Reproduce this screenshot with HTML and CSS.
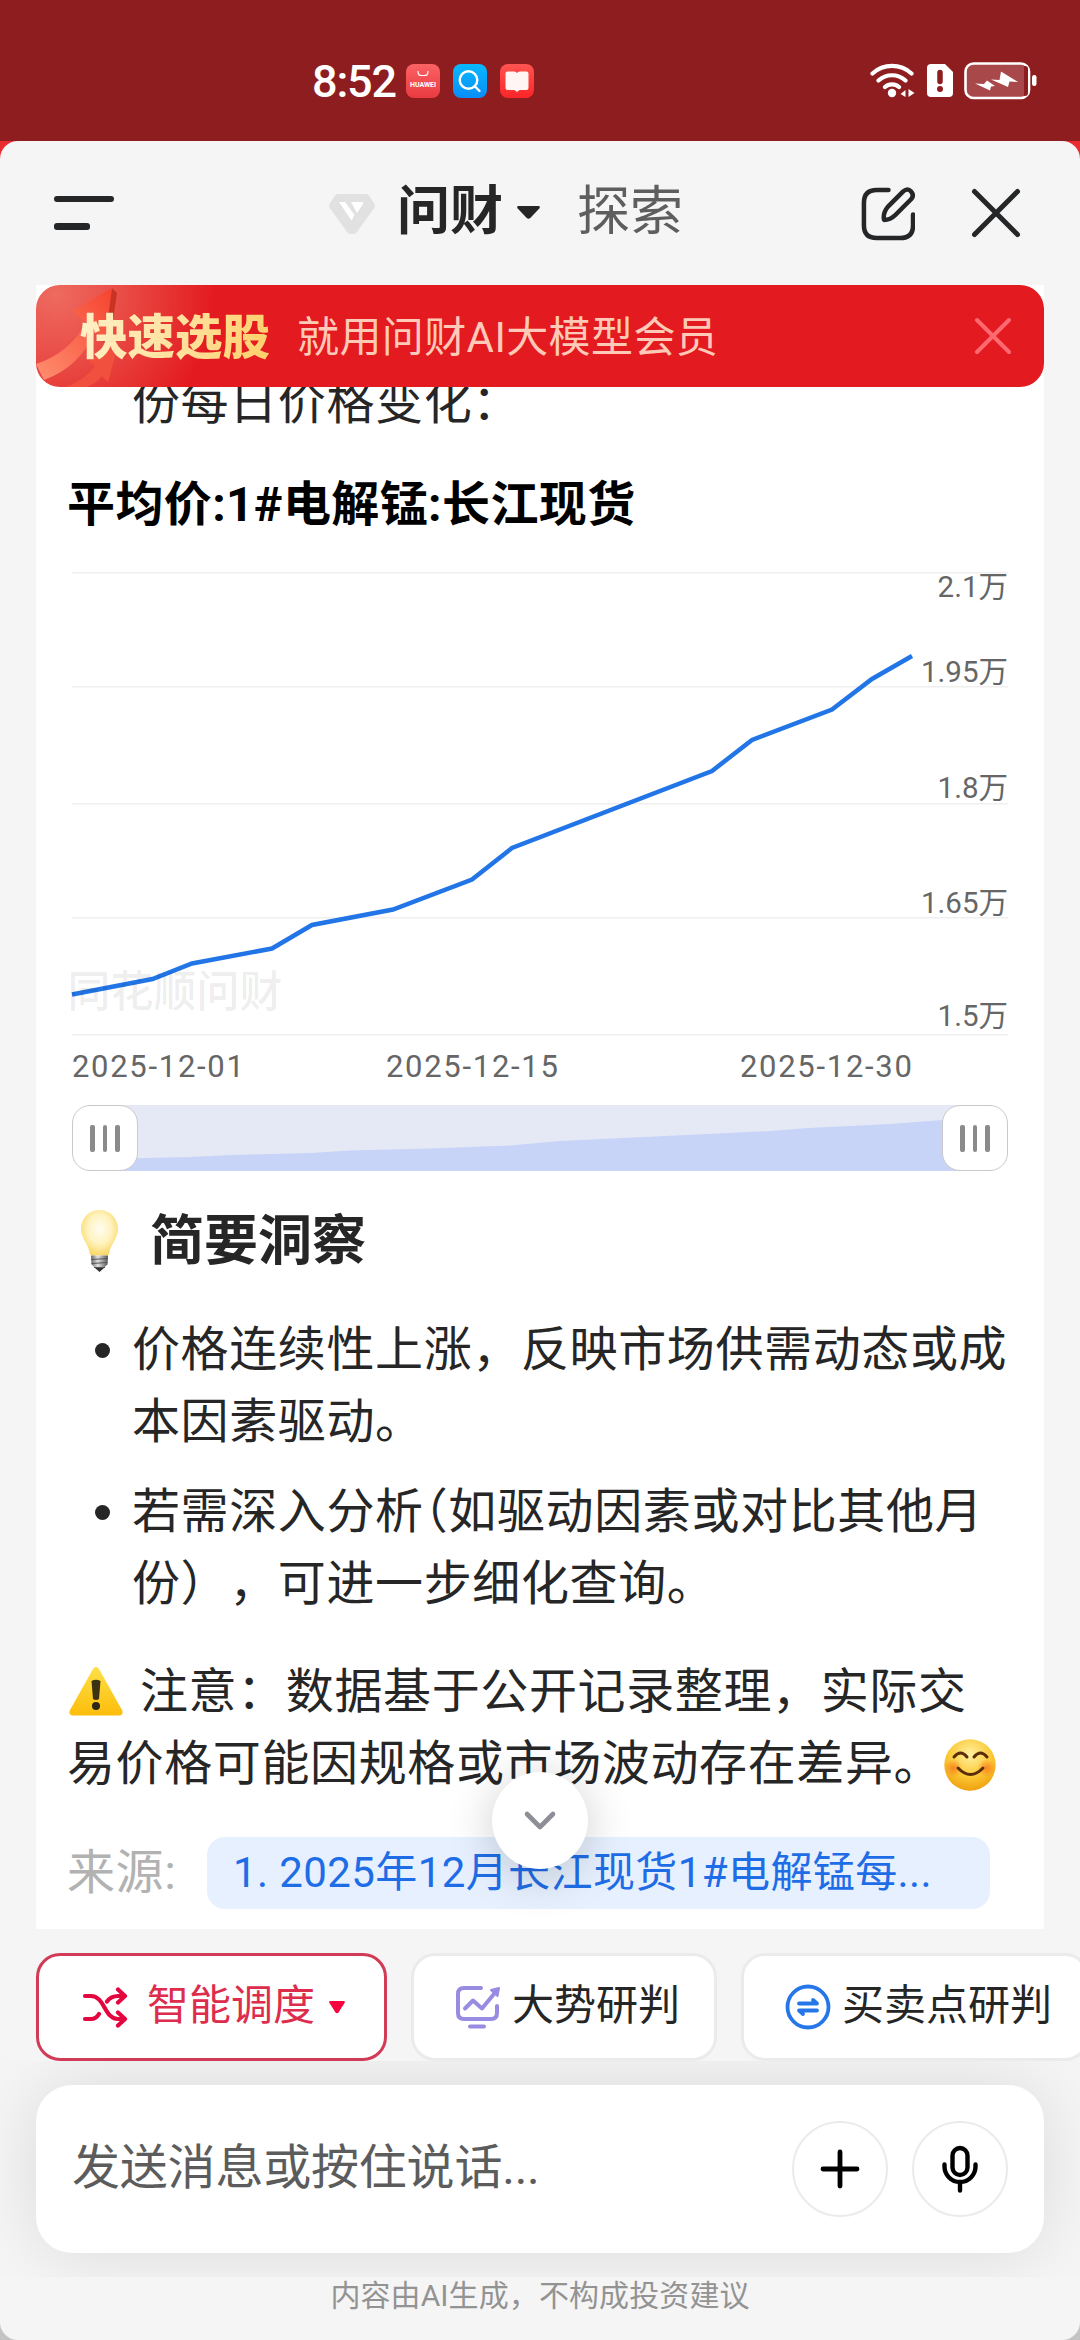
FILE: index.html
```html
<!DOCTYPE html>
<html lang="zh-CN">
<head>
<meta charset="utf-8">
<title>问财</title>
<link rel="stylesheet" href="styles.css">
</head>
<body>
<div class="status">
  <div class="status-left">
    <span class="time">8:52</span>
    <span class="app app-huawei">
      <svg width="34" height="34" viewBox="0 0 34 34"><path d="M12 7c0 5 2 4.500 5 4.500s5 .5 5-4.500" fill="none" stroke="#fff" stroke-width="1.200"/><text class="brand" x="17" y="22.500" text-anchor="middle" textLength="26">HUAWEI</text></svg>
    </span>
    <span class="app app-search">
      <svg width="34" height="34" viewBox="0 0 34 34" fill="none" stroke="#fff" stroke-width="2.400" stroke-linecap="round"><circle cx="15.500" cy="16" r="8.800"/><path d="M22 22.500l4.500 4.500"/></svg>
    </span>
    <span class="app app-book">
      <svg width="34" height="34" viewBox="0 0 34 34"><path d="M5.500 9.500q0-2 2-2h6.500q2 0 3 1.500 1-1.500 3-1.500h6.500q2 0 2 2v14.500q0 2-2 2h-7l-2.500 2-2.500-2h-7q-2 0-2-2z" fill="#fff5f4"/></svg>
    </span>
  </div>
  <div class="status-right">
    <svg width="46" height="36" viewBox="0 0 46 36" fill="none" stroke="#fff" stroke-width="4.200" stroke-linecap="round"><path d="M2.500 11.500a29 29 0 0 1 39 0M8.500 18.500a20 20 0 0 1 27 0M15 25a10.500 10.500 0 0 1 14 0"/><circle cx="22" cy="31" r="4.200" fill="#fff" stroke="none"/><path d="M35.500 28v7l-5-3zM38.500 27v8l6-4z" fill="#fff" stroke="none"/></svg>
    <svg width="28" height="34" viewBox="0 0 28 34"><path d="M5 0h14l8 8v21q0 4-4 4H5q-4 0-4-4V4q0-4 4-4z" fill="#fff"/><path d="M14 8.500v9" stroke="#8e1d20" stroke-width="5.500" stroke-linecap="round"/><circle cx="14" cy="25" r="3" fill="#8e1d20"/></svg>
    <svg width="74" height="38" viewBox="0 0 74 38"><rect x="1.500" y="1.500" width="63.500" height="34.500" rx="8" fill="#a9484b" stroke="#fff" stroke-width="2.600"/><path d="M60 4v30h1q3 0 3-3V7q0-3-3-3z" fill="#8e1d20"/><rect x="68" y="13" width="4.500" height="11" rx="2.200" fill="#fff"/><path d="M37 9.500l17 10.500-8.500-.5-1.500 5.500-17-7.500 8.500.5zM23 18.500l8 5.500-4 .5-1 4-15-7 9 .5z" fill="#fff"/></svg>
  </div>
</div>

<div class="backdrop">
<div class="sheet">
  <header class="nav">
    <button class="menu" aria-label="菜单"><i></i><i class="short"></i></button>
    <div class="tabs">
      <svg class="gem" width="46" height="40" viewBox="0 0 46 40"><path d="M9 0h28q2 0 3 1.500l5.500 8.500q1 2 0 3.500L28 38q-1 2-3.500 2h-3Q19 40 18 38L.5 13.500q-1-1.500 0-3.500L6 1.500Q7 0 9 0z" fill="#e1e1e1"/><path d="M10 8h6l9.500 13-3 5.500zM22 8h11q2 0 1 2l-6 9z" fill="#fff"/></svg>
      <span class="tab active">问财</span>
      <svg class="caret" width="23" height="14" viewBox="0 0 23 14"><path d="M1 0h21q1.500 1 .3 2.500l-9 9.500q-1.800 1.500-3.600 0l-9-9.500Q-.5 1 1 0z" fill="#262626"/></svg>
      <span class="tab">探索</span>
    </div>
    <div class="nav-actions">
      <svg width="55" height="55" viewBox="0 0 56 56" fill="none" stroke="#242628" stroke-width="4.600" stroke-linecap="round"><path d="M29 4H17Q4 4 4 17v23q0 13 13 13h24q13 0 13-13V29"/><path d="M24.500 34.500c-1-5 1-10 4-13.500L44 5.500q4.500-4 8 0t0 8L36 29.500c-3 3-7 5-11.500 5z" stroke-linejoin="round"/></svg>
      <svg width="52" height="52" viewBox="0 0 52 52" stroke="#242628" stroke-width="5" stroke-linecap="round"><path d="M4.500 4.500l43 43M47.500 4.500l-43 43"/></svg>
    </div>
  </header>

  <main class="card">
    <div class="banner">
      <svg class="banner-art" width="100" height="102" viewBox="0 0 100 102">
        <defs><linearGradient id="arrow" x1="0" y1="1" x2="1" y2="0"><stop offset="0" stop-color="#ff8f70"/><stop offset="1" stop-color="#f5432f"/></linearGradient></defs>
        <path d="M76 3l5 5-8 55-8-9z" fill="#c93323"/>
        <path d="M0 79Q34 68 50 37L36 26 76 3 69 56 60 45Q44 82 8 95z" fill="url(#arrow)"/>
        <path d="M30 102Q50 94 59 81l-6-5 30-19-11 40-6-6q-6 8-16 11z" fill="#f0503d"/>
      </svg>
      <strong class="banner-title">快速选股</strong>
      <span class="banner-text">就用问财AI大模型会员</span>
      <svg class="banner-close" width="40" height="40" viewBox="0 0 40 40" stroke="#ff6a70" stroke-width="4" stroke-linecap="round"><path d="M4 4l32 32M36 4L4 36"/></svg>
    </div>

    <p class="cut">份每日价格变化：</p>
    <h3 class="chart-title">平均价:1#电解锰:长江现货</h3>

    <svg class="chart" width="936" height="530" viewBox="72 560 936 530">
      <g fill="#efefef"><rect x="72" y="572" width="936" height="1.500"/><rect x="72" y="686" width="936" height="1.500"/><rect x="72" y="803" width="936" height="1.500"/><rect x="72" y="917" width="936" height="1.500"/><rect x="72" y="1034" width="936" height="1.500"/></g>
      <polyline points="72,994.500 152.500,979 192,963.500 272,948.500 312,925 393,909.500 472,879.500 512,848 712,771 752,740 832,709.500 872,679 912,656" fill="none" stroke="#2275e6" stroke-width="4.500"/>
      <text class="watermark" x="67.500" y="1007">同花顺问财</text>
      <g class="axis" text-anchor="end"><text x="1008" y="597">2.1万</text><text x="1008" y="682">1.95万</text><text x="1008" y="798">1.8万</text><text x="1008" y="913">1.65万</text><text x="1008" y="1026">1.5万</text></g>
      <g class="axis date"><text x="72" y="1077">2025-12-01</text><text x="386" y="1077">2025-12-15</text><text x="740" y="1077">2025-12-30</text></g>
    </svg>

    <div class="range">
      <svg class="range-area" width="870" height="66" viewBox="105 1105 870 66"><path d="M105 1159l85-2 40-2 80-2 40-2.500 80-2 80-3 50-4.500 210-10 38-3 82-4 52-4 33-3v54H105z" fill="#c8d4f7"/></svg>
      <span class="handle"><i></i><i></i><i></i></span>
      <span class="handle"><i></i><i></i><i></i></span>
    </div>

    <h2 class="insight">
      <svg width="37" height="62" viewBox="0 0 37 62">
        <defs><radialGradient id="bulb" cx=".5" cy=".42" r=".58"><stop offset="0" stop-color="#fffdf2"/><stop offset=".55" stop-color="#fff3c0"/><stop offset="1" stop-color="#f9d866"/></radialGradient><linearGradient id="screw"><stop offset="0" stop-color="#666"/><stop offset=".4" stop-color="#e2e2e2"/><stop offset="1" stop-color="#555"/></linearGradient></defs>
        <path d="M18.500 0C29 0 37 8 37 19c0 9-7 15-8.500 23-.5 3-1.500 3.500-4 3.500h-12c-2.500 0-3.500-.5-4-3.500C7 34 0 28 0 19 0 8 8 0 18.500 0z" fill="url(#bulb)"/>
        <path d="M10 45.500h17l-.5 9-4 3.500-4 3.500-4-3.500-4-3.500z" fill="url(#screw)"/><path d="M10 49.500l17-1M10.500 53.500l16-1M13 57.500h11" stroke="#555" stroke-width="1"/><path d="M14 58h9l-4.500 4z" fill="#333"/>
      </svg>
      <span>简要洞察</span>
    </h2>

    <ul class="points">
      <li>价格连续性上涨，反映市场供需动态或成本因素驱动。</li>
      <li>若需深入分析<span class="half">（</span>如驱动因素或对比其他月份），可进一步细化查询。</li>
    </ul>

    <p class="note"><svg class="warn" width="54" height="50" viewBox="0 0 54 50"><defs><linearGradient id="sign" x2="0" y2="1"><stop offset="0" stop-color="#fde047"/><stop offset="1" stop-color="#fdbd0b"/></linearGradient></defs><path d="M24 2q3-4 6 0l23 41q2 5-3 5.500H4Q-1 48 1 43z" fill="url(#sign)"/><path d="M22.500 14q4.500-2.500 9 0l-1.500 18q-3 2-6 0z" fill="#3b3213"/><circle cx="27" cy="39" r="4" fill="#2c2614"/></svg>注意：数据基于公开记录整理，实际交<br>易价格可能因规格或市场波动存在差异。<svg class="smile" width="52" height="52" viewBox="0 0 52 52"><defs><radialGradient id="face" cx=".5" cy=".3" r=".7"><stop offset="0" stop-color="#fff0a0"/><stop offset=".6" stop-color="#fbc935"/><stop offset="1" stop-color="#f0a010"/></radialGradient><radialGradient id="cheek"><stop offset="0" stop-color="#f96d1c" stop-opacity=".75"/><stop offset="1" stop-color="#f96d1c" stop-opacity="0"/></radialGradient></defs><circle cx="26" cy="26" r="25.700" fill="url(#face)"/><circle cx="9.500" cy="29" r="9" fill="url(#cheek)"/><circle cx="42.500" cy="29" r="9" fill="url(#cheek)"/><path d="M10 18q6.500-8 13 0M30 18q6.500-8 13 0M14 29q12.500 13 25 0" fill="none" stroke="#5c2d0b" stroke-width="3" stroke-linecap="round"/></svg></p>

    <div class="source">
      <span class="source-label">来源:</span>
      <a class="source-link">1. 2025年12月长江现货1#电解锰每...</a>
    </div>

    <button class="to-bottom" aria-label="滚动到底部"><svg width="34" height="22" viewBox="0 0 34 22" fill="none" stroke="#8d8e96" stroke-width="4.600" stroke-linecap="round" stroke-linejoin="round"><path d="M4 4l13 13L30 4"/></svg></button>
  </main>

  <div class="chips">
    <div class="chip selected">
      <svg width="46" height="42" viewBox="0 0 46 42" fill="none" stroke="#e4063f" stroke-width="4.200" stroke-linecap="round" stroke-linejoin="round"><path d="M3 10h6c14 0 13 23 27 23h6M3 33h6q5 0 8-5M25 15.500q4-5.500 11-5.500h6M36 3.500l7 6.500-7 6.500M36 26.500l7 6.500-7 6.500"/></svg>
      <span>智能调度</span>
      <svg class="chip-caret" width="16" height="13" viewBox="0 0 16 13"><path d="M1 0h14q1.500.5.500 2l-6 9.500q-1.500 1.500-3 0L.5 2Q-.5.5 1 0z" fill="#f7043f"/></svg>
    </div>
    <div class="chip">
      <svg width="46" height="44" viewBox="0 0 46 44" fill="none" stroke="#988be2" stroke-width="4" stroke-linecap="round" stroke-linejoin="round"><path d="M26 3H9Q3 3 3 9v19q0 6 6 6h27q6 0 6-6v-7M10 23.500l8-8 9 8L41 6.500M15 41.500h14"/><path d="M36 5l8-2-1.500 8z" fill="#988be2" stroke-width="2"/></svg>
      <span>大势研判</span>
    </div>
    <div class="chip">
      <svg width="46" height="46" viewBox="0 0 46 46" fill="none" stroke="#2576e8" stroke-width="3.800" stroke-linecap="round" stroke-linejoin="round"><circle cx="23" cy="23" r="20.500"/><path d="M14 19.500h18l-4-3.500M32 26.500H14l4 3.500"/></svg>
      <span>买卖点研判</span>
    </div>
  </div>

  <div class="composer-wrap">
    <div class="composer">
      <span class="placeholder">发送消息或按住说话...</span>
      <button class="round" aria-label="添加"><svg width="42" height="42" viewBox="0 0 42 42" stroke="#000" stroke-width="4.800" stroke-linecap="round"><path d="M21 4v34M4 21h34"/></svg></button>
      <button class="round" aria-label="语音"><svg width="38" height="48" viewBox="0 0 38 48" fill="none" stroke="#000" stroke-width="4.400" stroke-linecap="round"><rect x="11.500" y="3" width="15" height="27" rx="7.500"/><path d="M3.500 19.500v2a15.500 15.500 0 0 0 31 0v-2M19 37v8.500"/></svg></button>
    </div>
  </div>
  <footer class="disclaimer">内容由AI生成，不构成投资建议</footer>
</div>
</div>
</body>
</html>
```
FILE: styles.css
```css
* { box-sizing: border-box; margin: 0; padding: 0; }
body {
  width: 1080px;
  height: 2340px;
  overflow: hidden;
  font-family: Roboto, "Noto Sans CJK SC", sans-serif;
  color: #262626;
  background: #8e1d20;
  text-spacing-trim: space-all;
}
svg { display: block; flex: none; }
button { border: 0; background: none; font: inherit; }

/* Status bar */
.status {
  height: 141px;
  padding: 0 42px 0 312px;
  display: flex;
  align-items: flex-start;
  justify-content: space-between;
  background: #8e1d20;
}
.status-left { display: flex; align-items: center; padding-top: 62px; height: 100px; }
.time { width: 94px; padding-top: 2px; font-size: 45px; font-weight: 500; letter-spacing: -1.2px; color: #fff; line-height: 38px; }
.app { width: 34px; height: 34px; border-radius: 8px; margin-right: 13px; overflow: hidden; }
.app-huawei { background: linear-gradient(#fb6264, #e93b41); }
.app-search { background: linear-gradient(#08b9fc, #0a8dfa); }
.app-book { background: linear-gradient(#ff5450, #fb2528); }
.brand { font-size: 7px; font-weight: 700; fill: #fff; }
.status-right { display: flex; align-items: flex-start; padding-top: 62px; gap: 10px; }
.status-right svg:nth-child(2) { margin-top: 2px; }

/* Sheet */
.backdrop { height: 2199px; background: linear-gradient(#ea2c31 0 50%, #c4c4c4 50%); }
.sheet { height: 2199px; border-radius: 18px; overflow: hidden; background: #f5f5f5; display: flex; flex-direction: column; }
.nav { height: 144px; flex: none; padding: 0 58px 6px 54px; display: flex; align-items: center; }
.menu { width: 60px; display: flex; flex-direction: column; gap: 21px; margin-top: 5px; }
.menu i { height: 6.500px; border-radius: 3px; background: #242628; }
.menu .short { width: 36px; }
.tabs { display: flex; align-items: center; margin-left: 215px; }
.tab { font-size: 53px; line-height: 70px; color: #5e5e5e; padding-top: 4px; }
.tab.active { font-weight: 700; color: #262626; margin: 0 14px 0 22px; }
.gem { margin-top: 8px; }
.caret { margin: 6px 37px 0 0; }
.nav-actions { display: flex; align-items: center; gap: 55px; margin-left: auto; padding-top: 6px; }

/* Answer card */
.card { position: relative; width: 1008px; height: 1644px; flex: none; margin: 0 auto; padding: 80px 36px 0 31px; background: #fff; }
.banner {
  position: absolute;
  inset: 0 0 auto 0;
  height: 102px;
  padding: 0 31px 0 44px;
  border-radius: 24px;
  overflow: hidden;
  display: flex;
  align-items: center;
  background: radial-gradient(circle at 20px 10px, #ee6a5f 0, #e94a44 70px, #e31a1f 160px);
}
.banner-art { position: absolute; left: 0; top: 0; }
.banner-title {
  position: relative;
  width: 217px;
  padding-top: 4px;
  font-size: 47.500px;
  font-weight: 900;
  line-height: 70px;
  background: linear-gradient(100deg, #fff0c8, #ffe09a 50%, #ffc858);
  background-clip: text;
  -webkit-background-clip: text;
  color: transparent;
}
.banner-text { padding-top: 4px; font-size: 42px; line-height: 60px; letter-spacing: .4px; color: #ffc9b8; font-weight: 400; }
.banner-close { margin-left: auto; }

.cut, .points, .note, .source { font-size: 48px; line-height: 72px; letter-spacing: .62px; }
.cut { padding-left: 65px; margin-top: 2px; }
.chart-title { height: 72px; margin-top: 30px; font-size: 48px; line-height: 72px; color: #000; letter-spacing: .4px; white-space: nowrap; }
.chart { margin: 19px 0 0 5px; overflow: visible; }
.axis { font-size: 29.500px; fill: #666; }
.axis.date { font-size: 31px; letter-spacing: 1.700px; }
.watermark { font-size: 43px; font-weight: 500; fill: rgba(0, 0, 0, .08); }

.range { position: relative; display: flex; justify-content: space-between; width: 936px; height: 66px; margin: 15px 0 0 5px; }
.range-area { position: absolute; left: 33px; top: 0; background: #e5e9f6; }
.handle { position: relative; width: 66px; height: 66px; border: 1px solid #c9c9c9; border-radius: 18px; background: #fff; display: flex; align-items: center; justify-content: center; gap: 8px; }
.handle i { width: 4.500px; height: 27px; border-radius: 2px; background: #8a8a8a; }

.insight { display: flex; align-items: center; gap: 32px; height: 80px; margin-top: 30px; padding-left: 14px; font-size: 54px; line-height: 80px; }
.insight span { padding-top: 2px; }
.points { list-style: none; margin-top: 33px; padding-left: 65px; }
.points li { position: relative; margin: 0 -8px 18px 0; word-break: break-all; }
.points li::before { content: ""; position: absolute; left: -37px; top: 29px; width: 15px; height: 15px; border-radius: 50%; background: #262626; }
.half { font-feature-settings: "halt"; }
.note { margin-top: 36px; white-space: nowrap; }
.warn { display: inline-block; margin: 0 17px 0 2px; vertical-align: -9px; }
.smile { display: inline-block; margin-left: 2px; vertical-align: -11px; }
.source { display: flex; margin-top: 37px; }
.source-label { width: 140px; color: #b2b2b2; }
.source-link { width: 783px; padding-left: 26px; border-radius: 18px; background: #e6f0fe; color: #1f6de6; font-size: 42px; letter-spacing: .4px; white-space: nowrap; }
.to-bottom {
  position: absolute;
  left: 456px;
  top: 1487px;
  width: 96px;
  height: 97px;
  border-radius: 50%;
  background: #fff;
  box-shadow: 0 6px 48px rgba(0, 0, 0, .2);
  display: flex;
  align-items: center;
  justify-content: center;
}

/* Quick actions */
.chips { display: flex; gap: 24px; flex: none; padding: 24px 0 0 36px; height: 132px; overflow: hidden; }
.chip { flex: none; display: flex; align-items: center; height: 108px; padding: 0 34px 0 41px; border: 3px solid #ebebeb; border-radius: 24px; background: #fff; font-size: 42px; white-space: nowrap; gap: 11px; }
.chip span { line-height: 60px; padding-bottom: 2px; }
.chip.selected { width: 351px; padding-left: 43px; border-color: #d23b56; color: #dd2c4c; gap: 19px; }
.chip-caret { margin-left: -5px; }

/* Composer */
.composer-wrap { height: 216px; flex: none; padding: 24px 36px; overflow: hidden; }
.composer { height: 168px; border-radius: 36px; background: #fff; box-shadow: 0 0 72px rgba(0, 0, 0, .11); display: flex; align-items: center; gap: 24px; padding: 0 36px; }
.placeholder { flex: 1; padding-bottom: 3px; font-size: 48px; line-height: 70px; color: #5c5c5c; white-space: nowrap; letter-spacing: -.2px; }
.round { width: 96px; height: 96px; border: 2.500px solid #ebebeb; border-radius: 50%; display: flex; align-items: center; justify-content: center; }
.disclaimer { font-size: 30px; line-height: 38px; color: #939393; text-align: center; letter-spacing: .1px; }
```
